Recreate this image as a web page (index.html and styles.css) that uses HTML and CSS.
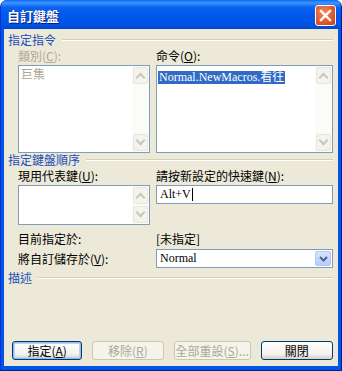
FILE: index.html
```html
<!DOCTYPE html>
<html lang="zh-Hant">
<head>
<meta charset="UTF-8" />
<title>自訂鍵盤</title>
<link rel="stylesheet" href="styles.css">
</head>
<body>

<div class="window">
  <div class="titlebar">
    <span class="title">自訂鍵盤</span>
    <button class="close-btn">
      <svg width="13" height="13" viewBox="0 0 13 13"><path d="M2 2 L11 11 M11 2 L2 11" stroke="#fff" stroke-width="2.4" stroke-linecap="square"/></svg>
    </button>
  </div>

  <div class="dialog">
    <!-- 指定指令 -->
    <div class="group-title"><span>指定指令</span></div>
    <div class="cols">
      <div class="label disabled">類別(<u>C</u>):</div>
      <div class="label">命令(<u>O</u>):</div>

      <div class="listbox tall">
        <div class="list-items"><div class="item disabled">巨集</div></div>
        <div class="scrollbar">
          <div class="arrow up"></div>
          <div class="arrow down"></div>
        </div>
      </div>
      <div class="listbox tall">
        <div class="list-items"><span class="item selected">Normal.NewMacros.看往</span></div>
        <div class="scrollbar">
          <div class="arrow up"></div>
          <div class="arrow down"></div>
        </div>
      </div>
    </div>

    <!-- 指定鍵盤順序 -->
    <div class="group-title"><span>指定鍵盤順序</span></div>
    <div class="cols keys">
      <div class="label">現用代表鍵(<u>U</u>):</div>
      <div class="label">請按新設定的快速鍵(<u>N</u>):</div>

      <div class="listbox short">
        <div class="list-items"></div>
        <div class="scrollbar">
          <div class="arrow up"></div>
          <div class="arrow down"></div>
        </div>
      </div>
      <div class="textbox">Alt+V<span class="caret"></span></div>

      <div class="label row-gap">目前指定於:</div>
      <div class="label row-gap">[未指定]</div>

      <div class="label save-label">將自訂儲存於(<u>V</u>):</div>
      <div class="combo">
        <span class="combo-value">Normal</span>
        <span class="combo-btn">
          <svg width="9" height="6" viewBox="0 0 9 6"><path d="M1 1 L4.5 4.5 L8 1" fill="none" stroke="#4D6185" stroke-width="2"/></svg>
        </span>
      </div>
    </div>

    <!-- 描述 -->
    <div class="group-title desc"><span>描述</span></div>

    <div class="buttons">
      <button class="btn default w71">指定(<u>A</u>)</button>
      <button class="btn disabled w72">移除(<u>R</u>)</button>
      <button class="btn disabled w78">全部重設(<u>S</u>)...</button>
      <button class="btn w73">關閉</button>
    </div>
  </div>
</div>

</body>
</html>
```

FILE: styles.css
```css
* {
  box-sizing: border-box;
}
body {
  margin: 0;
  background: #fff;
  font-family: "Noto Sans CJK TC", "Liberation Sans", sans-serif;
  font-size: 12px;
}

/* Window frame */
.window {
  width: 342px;
  height: 371px;
  display: flex;
  flex-direction: column;
  background: #0055E5;
  border-left: 1px solid #0831D9;
  border-right: 1px solid #001EA0;
  border-bottom: 1px solid #001EA0;
  border-radius: 7px 7px 0 0;
  overflow: hidden;
}

.titlebar {
  height: 29px;
  flex: none;
  display: flex;
  align-items: center;
  justify-content: space-between;
  padding: 0 5px 0 6px;
  background: linear-gradient(#0A6BF5 0%, #3D95FF 10%, #0C63F0 25%, #0058EE 50%, #0054E3 85%, #0046D0 100%);
}
.title {
  color: #fff;
  font-weight: bold;
  font-size: 13px;
  line-height: 14px;
  text-shadow: 1px 1px 0 #0A1E7C;
  margin-top: 2px;
}
.close-btn {
  width: 21px;
  height: 21px;
  padding: 0;
  border: 1px solid #fff;
  border-radius: 3px;
  background: radial-gradient(circle at 40% 35%, #F08B63 0%, #E15A2D 55%, #C2411A 100%);
  display: flex;
  align-items: center;
  justify-content: center;
  margin-top: 2px;
}

/* Dialog body */
.dialog {
  flex: 1;
  margin: 0 3px 4px 3px;
  background: #ECE9D8;
  display: flex;
  flex-direction: column;
  padding: 4px 5px 6px 4px;
}

.group-title {
  display: flex;
  align-items: center;
  color: #1D4FB8;
  line-height: 14px;
  height: 14px;
}
.group-title::after {
  content: "";
  flex: 1;
  height: 1px;
  margin-left: 6px;
  background: #D0D0BF;
  border-bottom: 1px solid #fff;
}
.group-title + .cols {
  margin-top: 2px;
}

.cols {
  display: grid;
  grid-template-columns: 132px 177px;
  column-gap: 6px;
  padding-left: 10px;
}

.label {
  line-height: 14px;
  height: 14px;
  color: #000;
  margin-bottom: 2px;
  white-space: nowrap;
}
.label u, .btn u {
  text-decoration: underline;
  text-underline-offset: 1px;
}
.disabled {
  color: #ACA899;
}

/* List boxes */
.listbox {
  display: flex;
  border: 1px solid #7F9DB9;
  background: #fff;
}
.listbox.tall {
  height: 88px;
}
.listbox.short {
  height: 40px;
}
.list-items {
  flex: 1;
  padding: 1px;
}
.item {
  font-family: "Liberation Serif", "Noto Sans CJK TC", serif;
  line-height: 13px;
  height: 13px;
  padding: 0 1px;
}
.item.disabled {
  font-family: "Noto Sans CJK TC", sans-serif;
  color: #ACA899;
}
.item.selected {
  display: inline-block;
  background: #316AC5;
  color: #fff;
}

.scrollbar {
  width: 17px;
  display: flex;
  flex-direction: column;
  justify-content: space-between;
  background: #FBFBF8;
  padding: 1px;
}
.arrow {
  height: 17px;
  border: 1px solid #E8E6DD;
  border-radius: 2px;
  background: #F4F3EE;
  display: flex;
  align-items: center;
  justify-content: center;
}
.arrow::before {
  content: "";
  width: 5px;
  height: 5px;
  border-left: 2px solid #C9C7BA;
  border-top: 2px solid #C9C7BA;
}
.arrow.up::before {
  transform: translateY(2px) rotate(45deg);
}
.arrow.down::before {
  transform: translateY(-2px) rotate(225deg);
}

/* Keys section */
.keys .listbox, .keys .textbox {
  align-self: start;
}
.textbox {
  height: 19px;
  border: 1px solid #7F9DB9;
  background: #fff;
  padding: 1px 3px;
  font-family: "Liberation Serif", serif;
  line-height: 15px;
  display: flex;
  align-items: center;
}
.caret {
  display: inline-block;
  width: 1px;
  height: 13px;
  background: #000;
  margin-left: 1px;
}
.row-gap {
  margin-top: 7px;
  margin-bottom: 3px;
}
.save-label {
  align-self: center;
  margin: 0;
}
.combo {
  height: 19px;
  border: 1px solid #7F9DB9;
  background: #fff;
  display: flex;
  align-items: center;
  padding: 1px;
}
.combo-value {
  flex: 1;
  padding-left: 2px;
  font-family: "Liberation Serif", serif;
  line-height: 15px;
}
.combo-btn {
  width: 16px;
  height: 15px;
  border-radius: 2px;
  background: linear-gradient(#D8E4FD, #B7CBF7);
  border: 1px solid #B4C8F5;
  display: flex;
  align-items: center;
  justify-content: center;
}

.group-title.desc {
  margin-top: 3px;
}

/* Buttons */
.buttons {
  margin-top: auto;
  display: flex;
  gap: 10px;
  padding-left: 4px;
}
.btn {
  height: 19px;
  padding: 0;
  font-family: "Noto Sans CJK TC", sans-serif;
  font-size: 12px;
  line-height: 14px;
  color: #000;
  border: 1px solid #003C74;
  border-radius: 3px;
  background: linear-gradient(#FFFFFF 0%, #F4F3EE 70%, #D6D0C5 100%);
}
.btn.default {
  box-shadow: inset 0 0 0 1px #98B8EA, inset 0 0 0 2px #BCD4F6;
}
.btn.disabled {
  border-color: #C9C7BA;
  background: #F5F4EA;
  color: #ACA899;
}
.w71 { width: 71px; }
.w72 { width: 72px; }
.w78 { width: 78px; }
.w73 { width: 73px; }
```
